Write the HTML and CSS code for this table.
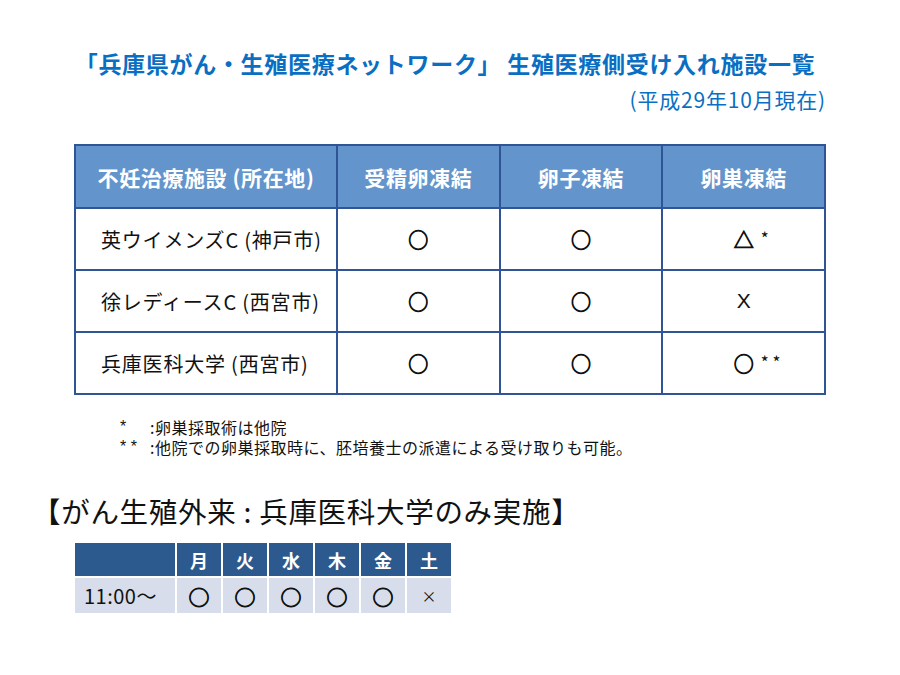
FILE: index.html
```html
<!DOCTYPE html>
<html lang="ja">
<head>
<meta charset="utf-8">
<title>兵庫県がん・生殖医療ネットワーク 生殖医療側受け入れ施設一覧</title>
<link rel="stylesheet" href="styles.css">
</head>
<body>
<div class="page">
  <h1 class="title">「兵庫県がん・生殖医療ネットワーク」 生殖医療側受け入れ施設一覧</h1>
  <p class="subtitle">(平成29年10月現在)</p>

  <table class="facilities">
    <thead>
      <tr>
        <th class="c-name">不妊治療施設 (所在地)</th>
        <th>受精卵凍結</th>
        <th>卵子凍結</th>
        <th>卵巣凍結</th>
      </tr>
    </thead>
    <tbody>
      <tr>
        <td class="name">英ウイメンズC (神戸市)</td>
        <td class="o">○</td>
        <td class="o">○</td>
        <td><span class="mark o">△</span><span class="ast">*</span></td>
      </tr>
      <tr>
        <td class="name">徐レディースC (西宮市)</td>
        <td class="o">○</td>
        <td class="o">○</td>
        <td class="x">X</td>
      </tr>
      <tr>
        <td class="name">兵庫医科大学 (西宮市)</td>
        <td class="o">○</td>
        <td class="o">○</td>
        <td><span class="mark o">○</span><span class="ast">* *</span></td>
      </tr>
    </tbody>
  </table>

  <div class="notes">
    <div class="note"><span class="nkey">*</span><span class="ntext">:卵巣採取術は他院</span></div>
    <div class="note"><span class="nkey">* *</span><span class="ntext">:他院での卵巣採取時に、胚培養士の派遣による受け取りも可能。</span></div>
  </div>

  <h2 class="clinic">【がん生殖外来 : 兵庫医科大学のみ実施】</h2>

  <table class="schedule">
    <thead>
      <tr>
        <th class="time-h"></th>
        <th>月</th><th>火</th><th>水</th><th>木</th><th>金</th><th>土</th>
      </tr>
    </thead>
    <tbody>
      <tr>
        <td class="time">11:00〜</td>
        <td class="o">○</td><td class="o">○</td><td class="o">○</td><td class="o">○</td><td class="o">○</td><td class="small">×</td>
      </tr>
    </tbody>
  </table>
</div>
</body>
</html>
```

FILE: styles.css
```css
* { box-sizing: border-box; }

html, body {
  margin: 0;
  padding: 0;
  background: #ffffff;
}

body {
  font-family: "Noto Sans CJK JP", "Noto Sans", sans-serif;
  color: #111111;
}

.page {
  width: 900px;
  height: 675px;
  padding-top: 48px;
  overflow: hidden;
}

.title {
  margin: 0;
  padding-right: 10px;
  font-size: 23px;
  line-height: 30px;
  font-weight: 700;
  color: #0a6fc2;
  text-align: center;
  letter-spacing: 0.7px;
}

.subtitle {
  margin: 9px 0 0 0;
  padding-right: 74px;
  font-size: 21px;
  line-height: 24px;
  color: #0a6fc2;
  text-align: right;
  letter-spacing: 0.8px;
}

.facilities {
  margin: 33px 0 0 74px;
  width: 752px;
  border-collapse: collapse;
  table-layout: fixed;
}

.facilities th,
.facilities td {
  border: 2px solid #2f5597;
  text-align: center;
  padding: 0;
}

.facilities th {
  background: #6395cc;
  color: #ffffff;
  font-weight: 700;
  font-size: 21px;
  letter-spacing: 0.6px;
  height: 63px;
}

.facilities th.c-name { width: 262px; }

.facilities td {
  height: 62px;
  font-size: 20px;
}

.facilities td.name {
  text-align: left;
  padding-left: 25px;
  letter-spacing: 0.8px;
}

.o {
  -webkit-text-stroke: 0.9px #111111;
}

.facilities .mark {
  display: inline-block;
}

.facilities .ast {
  display: inline-block;
  width: 40px;
  margin-right: -40px;
  padding-left: 7px;
  text-align: left;
  font-size: 17px;
  vertical-align: 3px;
  white-space: pre;
}

.facilities td.x {
  font-family: "Liberation Sans", sans-serif;
  font-size: 21px;
}

.notes {
  margin: 22px 0 0 120px;
  font-size: 16px;
  line-height: 20px;
}

.note {
  display: flex;
  height: 20px;
}

.nkey {
  width: 30px;
  font-family: "Liberation Sans", sans-serif;
}

.ntext {
  letter-spacing: 0.5px;
}

.clinic {
  margin: 37px 0 0 32px;
  font-size: 28.5px;
  line-height: 34px;
  font-weight: 400;
  color: #111111;
  letter-spacing: 0.7px;
}

.schedule {
  margin: 13px 0 0 73px;
  border-collapse: separate;
  border-spacing: 2px;
  table-layout: fixed;
}

.schedule th,
.schedule td {
  padding: 0;
  text-align: center;
  width: 44px;
}

.schedule th {
  background: #2c5a8e;
  color: #ffffff;
  font-size: 18px;
  font-weight: 700;
  height: 33px;
}

.schedule th.time-h,
.schedule td.time {
  width: 100px;
}

.schedule td {
  background: #d7ddea;
  height: 35px;
  font-size: 21px;
}

.schedule td.time {
  text-align: left;
  padding-left: 9px;
  font-size: 20px;
  letter-spacing: 0.5px;
}

.schedule td.small {
  font-size: 15px;
}
```
